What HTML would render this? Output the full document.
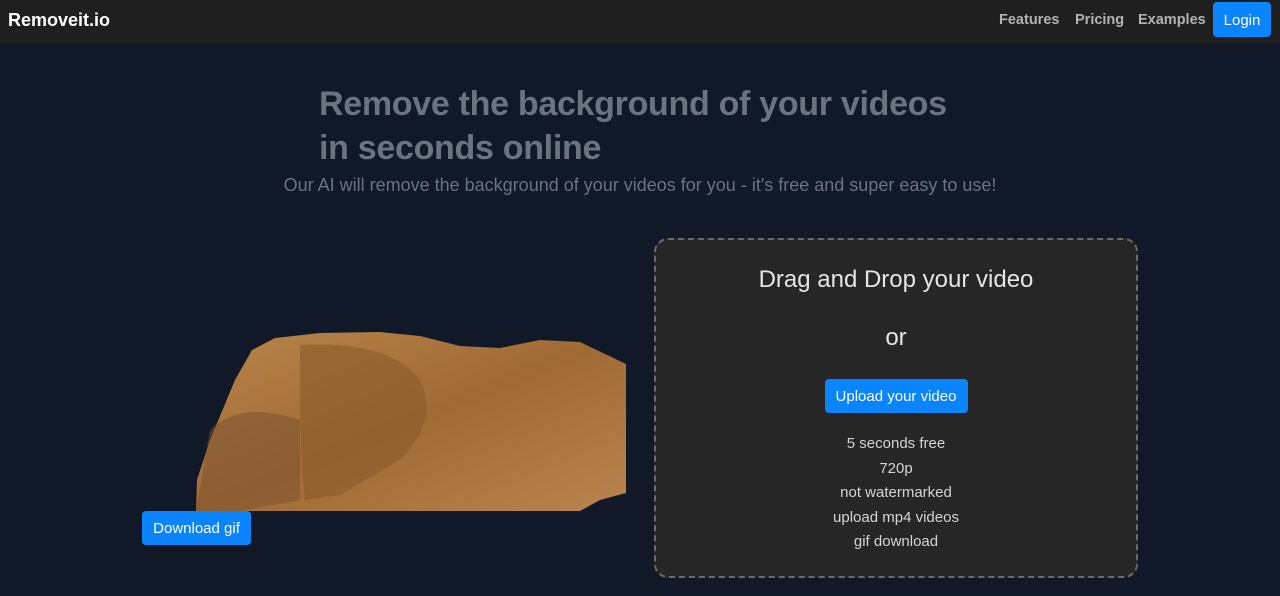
<!DOCTYPE html>
<html><head><style>
body{margin:0;width:1280px;height:596px;background:#111827;font-family:"Liberation Sans",sans-serif;overflow:hidden;position:relative}
.nav{position:absolute;left:0;top:0;width:1280px;height:43px;background:#1f1f1f}
.logo{position:absolute;left:8px;top:10px;color:#fff;font-weight:bold;font-size:18px}
.nl{position:absolute;top:12px;color:#b3b3b3;font-weight:bold;font-size:14.5px}
.btn{position:absolute;background:#0a84ff;color:#fff;border-radius:4px;text-align:center}
h1{position:absolute;left:319px;top:82px;margin:0;color:#6b7280;font-size:34px;line-height:44px;font-weight:bold;letter-spacing:-0.3px}
.sub{position:absolute;left:0;width:1280px;text-align:center;top:175px;color:#6b7280;font-size:18px}
.box{position:absolute;left:654px;top:238px;width:480px;height:336px;border:2px dashed #6b6b6b;border-radius:14px;background:#262626;color:#e5e5e5;text-align:center}
.f{font-size:15px;line-height:24.5px;color:#d4d4d4}
</style></head><body>
<div class="nav"><div class="logo">Removeit.io</div>
<div class="nl" style="left:999px">Features</div><div class="nl" style="left:1075px">Pricing</div><div class="nl" style="left:1138px">Examples</div>
<div class="btn" style="left:1213px;top:2px;width:58px;height:35px;line-height:37px;font-size:15px">Login</div></div>
<h1>Remove the background of your videos<br>in seconds online</h1>
<div class="sub">Our AI will remove the background of your videos for you - it's free and super easy to use!</div>
<svg style="position:absolute;left:0;top:0" width="1280" height="596">
<defs><linearGradient id="g" x1="0" y1="0" x2="1" y2="1"><stop offset="0" stop-color="#b9854c"/><stop offset=".5" stop-color="#a06a34"/><stop offset="1" stop-color="#b98450"/></linearGradient></defs>
<path d="M196 511 L197 480 L210 440 L235 380 L252 350 L275 338 L320 333 L380 332 L420 336 L460 346 L500 348 L540 340 L580 342 L626 364 L626 493 L600 500 L580 511 Z" fill="url(#g)"/>
<path d="M300 345 Q390 340 420 380 Q440 420 400 460 L340 495 L305 500 Q300 450 300 400 Z" fill="#8a5a2c" opacity=".6"/>
<path d="M210 430 Q240 400 300 420 L300 500 L240 511 L196 511 Z" fill="#7a5030" opacity=".5"/>
</svg>
<div class="btn" style="left:142px;top:511px;width:109px;height:34px;line-height:36px;font-size:15px">Download gif</div>
<div class="box">
<div style="font-size:24px;margin-top:26px">Drag and Drop your video</div>
<div style="font-size:24px;margin-top:30px">or</div>
<div class="btn" style="position:relative;margin:27px auto 0;width:143px;height:34px;line-height:36px;font-size:15px">Upload your video</div>
<div class="f" style="margin-top:19px">5 seconds free<br>720p<br>not watermarked<br>upload mp4 videos<br>gif download</div>
</div>
</body></html>
